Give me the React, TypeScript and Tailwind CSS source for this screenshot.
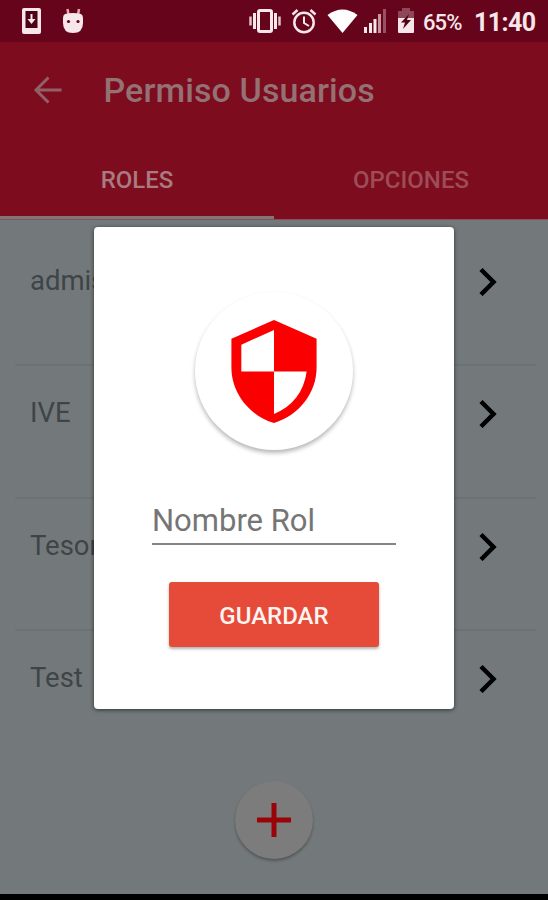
type Role = { id: number; name: string };

const ROLES: Role[] = [
  { id: 1, name: "admision" },
  { id: 2, name: "IVE" },
  { id: 3, name: "Tesorero" },
  { id: 4, name: "Test" },
];

export default function App() {
  return (
    <div className="relative flex h-[900px] w-[548px] flex-col overflow-hidden bg-[#73797b] font-['Roboto',sans-serif]">
      <StatusBar />
      <Header />
      <RoleList />
      <div className="h-[6px] bg-black" />
      <AddButton />
      <RoleDialog />
    </div>
  );
}

function StatusBar() {
  return (
    <div className="flex h-[42px] shrink-0 items-center bg-[#66041b] pr-[12px] pl-[21px] text-[#f7e6ea]">
      <svg className="h-[28px] w-[21px]" viewBox="0 0 21 28" fill="none">
        <rect x="1" y="1" width="19" height="26" rx="2" fill="currentColor" />
        <rect x="4.500" y="4" width="12" height="17" fill="#4d0315" />
        <path d="M10.5 7v6" stroke="currentColor" strokeWidth="2" />
        <path d="M6.500 12h8l-4 5z" fill="currentColor" />
      </svg>
      <svg className="ml-[19px] h-[26px] w-[24px]" viewBox="0 0 24 26">
        <path d="M6.500 1l1 6M18 1l-1 6" stroke="#e8a4b1" strokeWidth="2.5" />
        <path d="M4 6q8-2 16 0 2 1 2 4v5q0 10-10 10T2 15v-5q0-3 2-4z" fill="currentColor" />
        <circle cx="7.5" cy="13.500" r="1.6" fill="#66041b" />
        <circle cx="17" cy="13.500" r="1.6" fill="#66041b" />
      </svg>
      <div className="ml-auto flex items-center">
        <svg className="h-[26px] w-[34px]" viewBox="0 0 34 26" fill="none" stroke="currentColor">
          <rect x="10.5" y="2.5" width="13" height="21" rx="1.5" strokeWidth="3" />
          <path d="M6.500 5v16M27.500 5v16" strokeWidth="3" />
          <path d="M2.500 8.500v9M31.500 8.500v9" strokeWidth="2.5" opacity=".85" />
        </svg>
        <svg className="ml-[9px] h-[26px] w-[26px]" viewBox="0 0 26 26" fill="none" stroke="currentColor" strokeWidth="2.5">
          <circle cx="13" cy="14.5" r="9.7" />
          <path d="M1.5 6.5l5-4.5M24.5 6.5l-5-4.5" />
          <path d="M13 8.5V15l5 3" strokeWidth="2" />
        </svg>
        <svg className="ml-[10px] h-[25px] w-[31px]" viewBox="0 0 31 25">
          <path d="M0.5 6Q15.5-5 30.5 6L15.5 24z" fill="#fff" />
        </svg>
        <svg className="ml-[6px] h-[26px] w-[23px]" viewBox="0 0 23 26" fill="currentColor">
          <path d="M0 19h3v6H0zM5 15h3v10H5zM9.500 11h3v14h-3z" />
          <path d="M14 6h3v19h-3z" opacity=".65" />
          <path d="M19 1h3v24h-3z" opacity=".35" />
        </svg>
        <svg className="ml-[10px] h-[26px] w-[18px]" viewBox="0 0 18 26">
          <path d="M5 0h8v3h4v9H1V3h4z" fill="#8d4758" />
          <path d="M1 10h16v14q0 1-1 1H2q-1 0-1-1z" fill="currentColor" />
          <path d="M12 6l-8 8.500h4L6 21l8-9h-4z" fill="#4d0315" />
        </svg>
        <span className="mt-[3px] ml-[8px] w-[51px] text-[22px] leading-none font-medium tracking-[-0.9px] whitespace-nowrap">65%</span>
        <span className="mt-[3px] w-[62px] text-[25px] leading-none font-bold tracking-[-0.6px] whitespace-nowrap">11:40</span>
      </div>
    </div>
  );
}

function Header() {
  return (
    <header className="h-[178px] shrink-0 border-b border-[#87505a] bg-[#7d0c1e]">
      <div className="flex h-[96px] items-center pl-[33px]">
        <svg className="h-[28px] w-[29px]" viewBox="0 0 29 28" fill="none" stroke="#926067" strokeWidth="3">
          <path d="M28.500 14H3M15.500 1.500L3 14l12.500 12.500" />
        </svg>
        <h1 className="ml-[41.500px] text-[34px] leading-none font-medium tracking-[0.1px] whitespace-nowrap text-[#947174]">Permiso Usuarios</h1>
      </div>
      <nav className="grid h-[81px] grid-cols-2 text-[24px] leading-none font-medium">
        <div className="flex h-[81px] items-center justify-center border-b-[3px] border-[#807779] pt-[5px] text-[#a87b81]">ROLES</div>
        <div className="flex h-[78px] items-center justify-center pt-[5px] text-[#9c4d58]">OPCIONES</div>
      </nav>
    </header>
  );
}

function RoleList() {
  return (
    <ul className="flex-1 pt-[13.500px] pr-[12px] pl-[15px]">
      {ROLES.map((role) => (
        <li
          key={role.id}
          className="flex h-[132.500px] items-start justify-between border-b-2 border-[#6b7274] pt-[31px] pr-[38px] pl-[15px] text-[27.500px] leading-[32px] text-[#3e4447] last:border-b-0"
        >
          <span>{role.name}</span>
          <svg className="mt-[2px] h-[29px] w-[19px]" viewBox="0 0 19 29" fill="none" stroke="#000" strokeWidth="4.500">
            <path d="M2 2.500L14.500 15 2 27.500" />
          </svg>
        </li>
      ))}
    </ul>
  );
}

function AddButton() {
  return (
    <button className="absolute top-[781px] left-[235px] flex size-[78px] items-center justify-center rounded-full bg-[#7c7c7c] shadow-[0_2px_3px_rgba(0,0,0,0.3)]">
      <svg className="size-[34px]" viewBox="0 0 34 34" fill="none" stroke="#990409" strokeWidth="5">
        <path d="M17 0v34M0 17h34" />
      </svg>
    </button>
  );
}

function RoleDialog() {
  return (
    <div className="absolute top-[227px] left-[94px] flex h-[482px] w-[360px] flex-col items-center rounded-[4px] bg-white pt-[65px] shadow-[0_1px_4px_rgba(0,0,0,0.6)]">
      <div className="flex size-[158px] shrink-0 items-center justify-center rounded-full bg-white shadow-[0_3px_4px_rgba(0,0,0,0.28)]">
        <svg className="mt-[1px] h-[103px] w-[86px]" viewBox="0 0 86 104">
          <path d="M43 0l43 19v29c0 25-17 48-43 56C17 96 0 73 0 48V19z" fill="#fb0000" />
          <path d="M43 10v42H10V25zM43 52h33C73 73 62 87 43 95z" fill="#fff" />
        </svg>
      </div>
      <input
        placeholder="Nombre Rol"
        className="mt-[43px] h-[52px] w-[244px] border-b-2 border-[#858585] pt-[4px] text-[31px] outline-none placeholder:text-[#757575]"
      />
      <button className="mt-[37px] h-[65px] w-[210px] rounded-[3px] bg-[#e64a39] pt-[2px] text-[24px] leading-none font-medium text-[#fff4ef] shadow-[0_2px_3px_rgba(0,0,0,0.3)]">
        GUARDAR
      </button>
    </div>
  );
}
